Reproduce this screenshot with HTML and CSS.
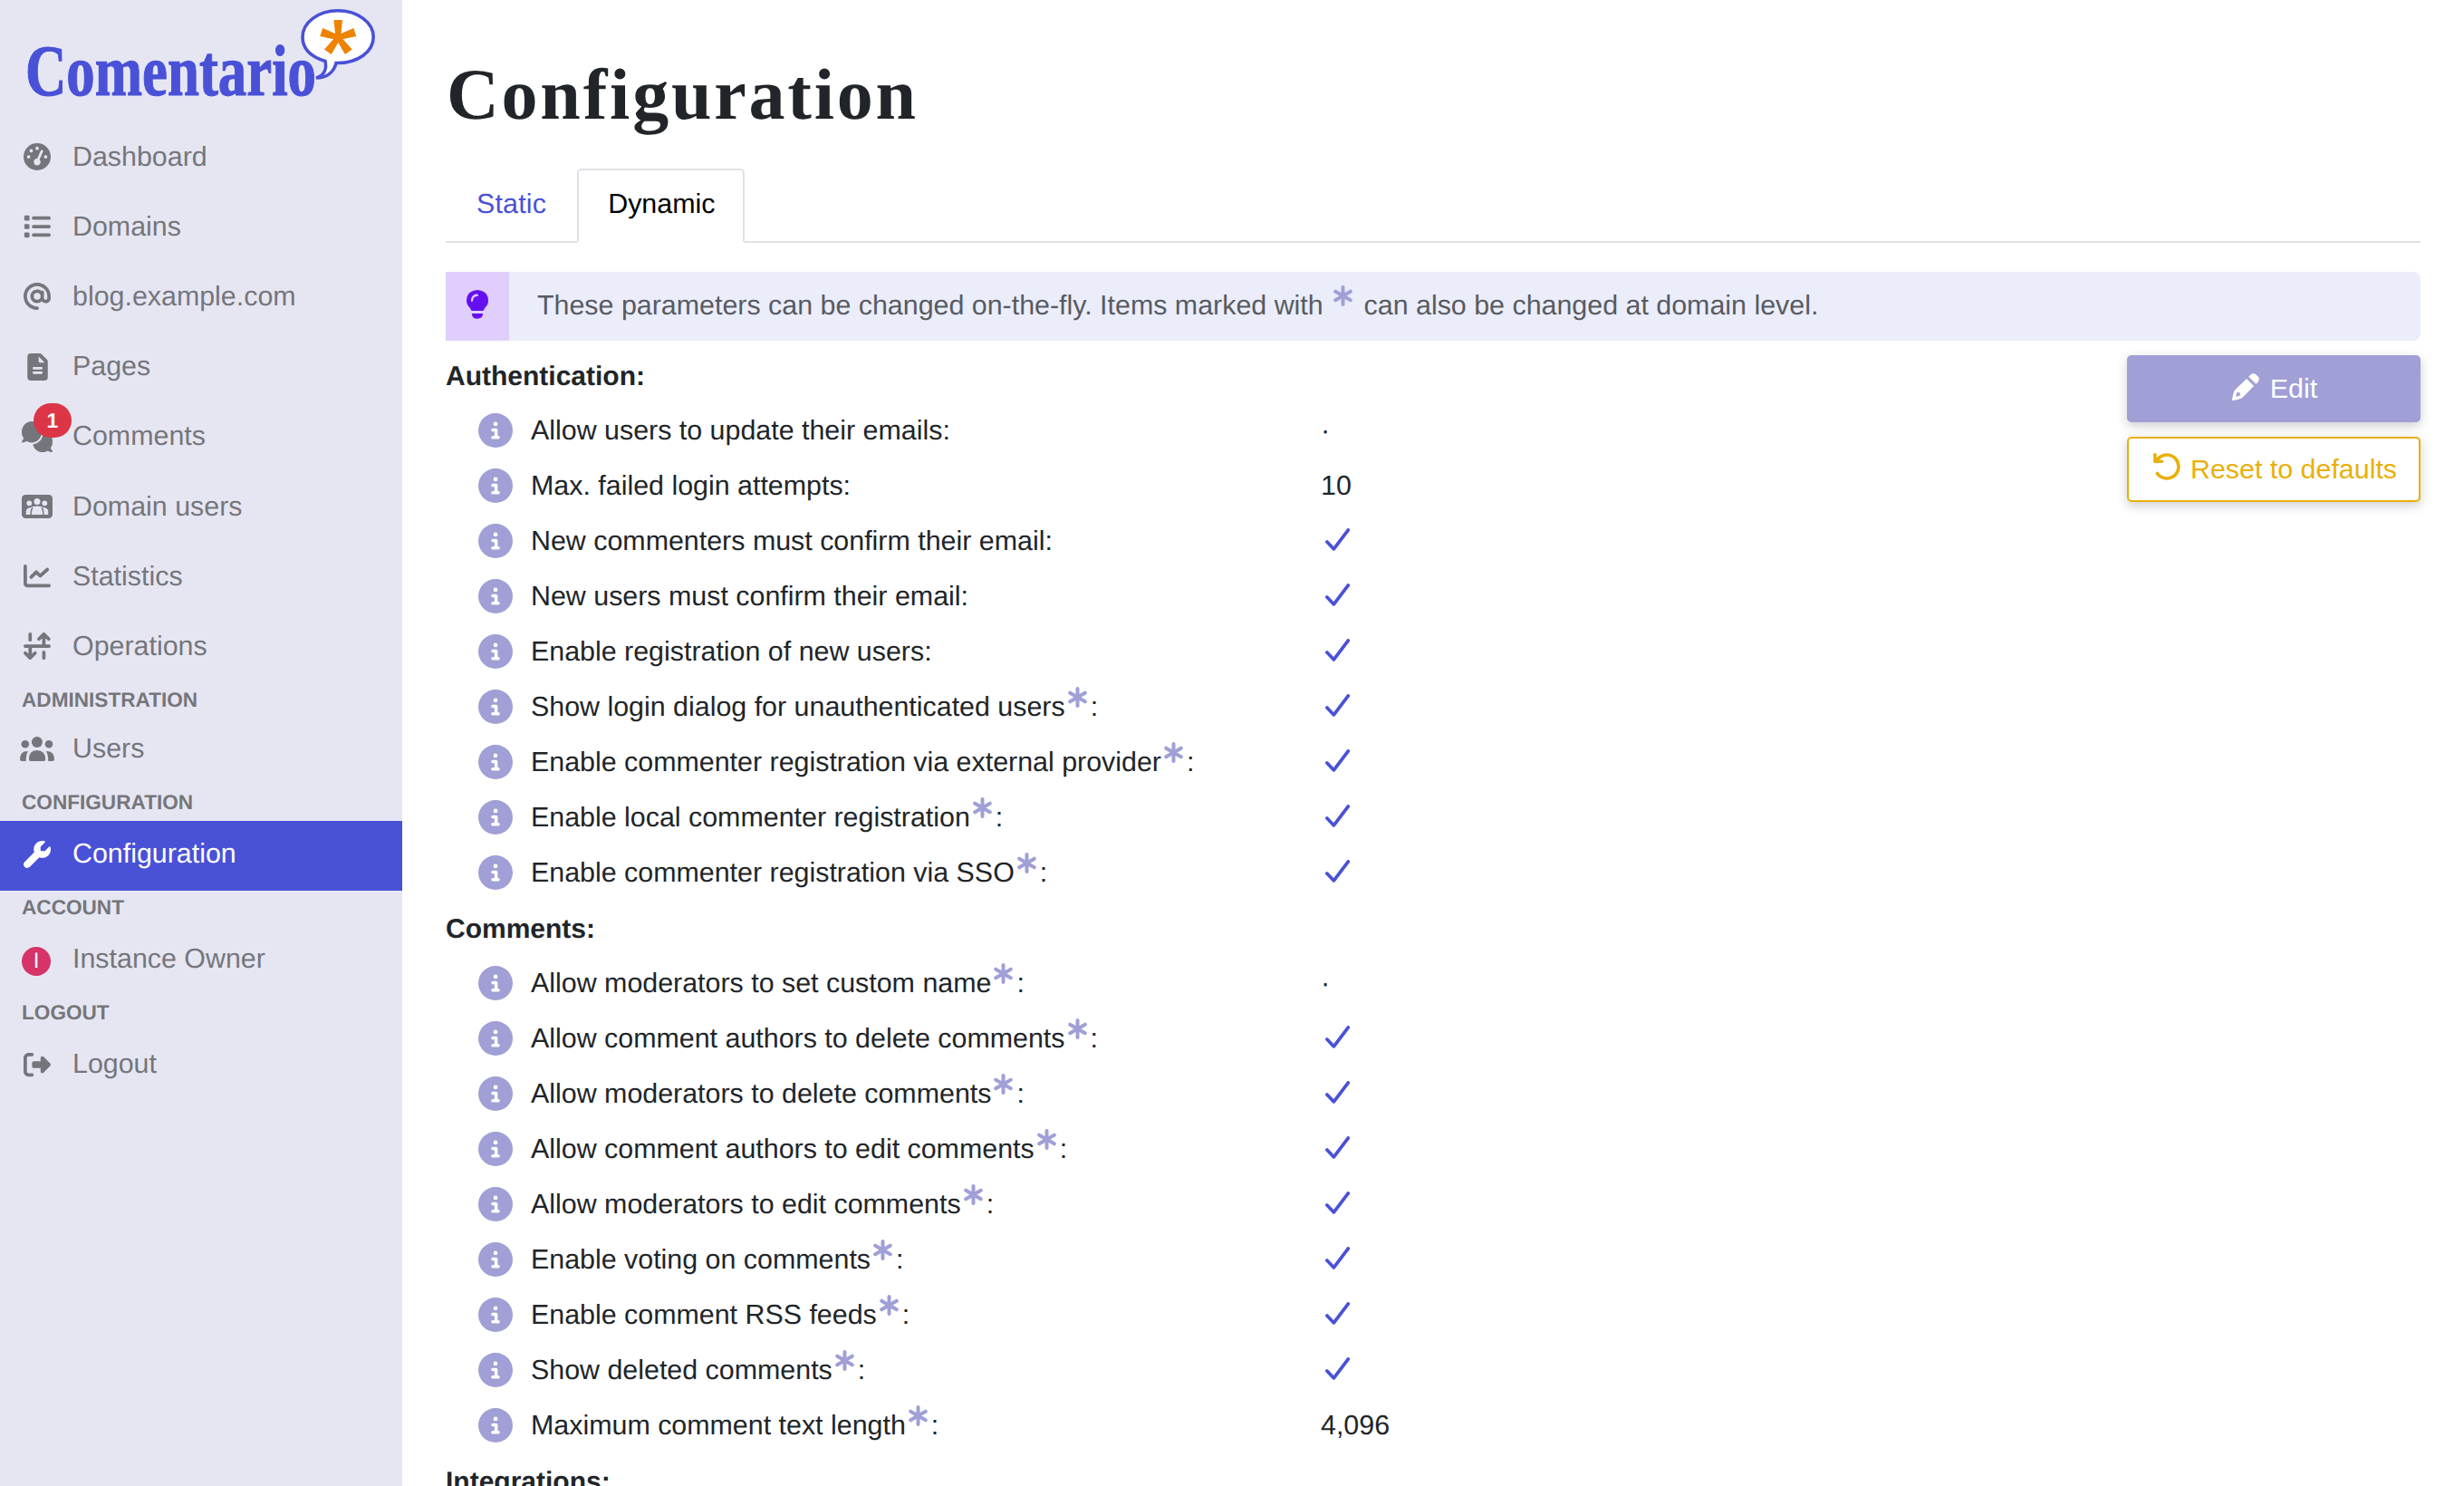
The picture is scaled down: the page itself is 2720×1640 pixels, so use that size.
FILE: index.html
```html
<!DOCTYPE html>
<html lang="en">
<head>
<meta charset="utf-8">
<title>Configuration | Comentario</title>
<link rel="stylesheet" href="styles.css">
</head>
<body>
<!-- icon sprite -->
<svg class="sprite">
	<symbol id="i-gauge" viewBox="0 0 512 512"><path fill-rule="evenodd" d="M0 256a256 256 0 1 1 512 0A256 256 0 1 1 0 256zM288 96a32 32 0 1 0 -64 0 32 32 0 1 0 64 0zM256 416c35.3 0 64-28.7 64-64c0-17.4-6.9-33.1-18.1-44.6L366 161.7c5.3-12.1-.2-26.3-12.3-31.6s-26.3 .2-31.6 12.3L257.9 288c-.6 0-1.3 0-1.9 0c-35.3 0-64 28.7-64 64s28.7 64 64 64zM176 144a32 32 0 1 0 -64 0 32 32 0 1 0 64 0zM96 288a32 32 0 1 0 0-64 32 32 0 1 0 0 64zm352-32a32 32 0 1 0 -64 0 32 32 0 1 0 64 0z"/></symbol>
	<symbol id="i-list" viewBox="0 0 512 512"><rect x="14" y="48" width="98" height="98" rx="24"/><rect x="14" y="207" width="98" height="98" rx="24"/><rect x="14" y="366" width="98" height="98" rx="24"/><path class="line" d="M188 97H480M188 256H480M188 415H480"/></symbol>
	<symbol id="i-at" viewBox="0 0 512 512"><path d="M256 64C150 64 64 150 64 256s86 192 192 192c17.700 0 32 14.300 32 32s-14.300 32-32 32C114.600 512 0 397.400 0 256S114.600 0 256 0S512 114.600 512 256v32c0 53-43 96-96 96c-29.300 0-55.600-13.200-73.200-33.900C320 371.100 289.500 384 256 384c-70.700 0-128-57.300-128-128s57.300-128 128-128c27.900 0 53.700 8.900 74.700 24.100c5.700-5 13.100-8.100 21.300-8.100c17.700 0 32 14.300 32 32v112c0 17.700 14.300 32 32 32s32-14.300 32-32V256c0-106-86-192-192-192zm64 192a64 64 0 1 0 -128 0 64 64 0 1 0 128 0z"/></symbol>
	<symbol id="i-file" viewBox="0 0 384 512"><path fill-rule="evenodd" d="M64 0H235Q252 0 264 12L372 120Q384 132 384 149V448Q384 512 320 512H64Q0 512 0 448V64Q0 0 64 0zM212 58V150Q212 174 236 174H326zM120 256Q97 256 97 278T120 302H266Q288 300 288 278T266 256zM120 342Q97 342 97 364T120 388H266Q288 386 288 364T266 342z"/></symbol>
	<symbol id="i-comments" viewBox="0 0 640 512" preserveAspectRatio="none"><path d="M208 352c114.900 0 208-78.800 208-176S322.900 0 208 0S0 78.800 0 176c0 38.600 14.700 74.300 39.600 103.400c-3.500 9.400-8.700 17.700-14.200 24.700c-4.800 6.200-9.700 11-13.300 14.300c-1.800 1.600-3.300 2.900-4.300 3.700C1 327.200-1.400 334.400 .8 340.900S9.100 352 16 352c21.800 0 43.800-5.600 62.100-12.500c9.200-3.500 17.800-7.400 25.200-11.400C134.100 343.300 169.800 352 208 352zM448 176c0 112.300-99.100 196.900-216.500 207C255.800 457.400 336.400 512 432 512c38.200 0 73.900-8.700 104.700-23.900c7.500 4 16 7.900 25.200 11.400c18.300 6.900 40.300 12.500 62.100 12.500c6.900 0 13.100-4.500 15.200-11.100c2.100-6.600-.2-13.800-5.800-17.900c-1-.8-2.500-2-4.300-3.700c-3.600-3.300-8.500-8.100-13.300-14.300c-5.500-7-10.700-15.400-14.200-24.700c24.900-29 39.600-64.700 39.600-103.400c0-92.800-84.900-168.900-192.600-175.500c.4 5.100 .6 10.300 .6 15.500z"/></symbol>
	<symbol id="i-users-rect" viewBox="0 0 34 26"><rect width="34" height="26" rx="4.200"/><g class="cutout"><circle cx="8.300" cy="9.300" r="2.900"/><circle cx="25.300" cy="9.300" r="2.900"/><circle cx="17" cy="7.500" r="3.500"/><path d="M4.800 22V18.500Q4.800 14.500 9.800 14.300Q12 12.400 17 12.400T24.200 14.300Q29.200 14.500 29.200 18.500V22z"/></g><path class="thin" d="M10.200 22V20Q10.200 16.500 12 14.200M23.800 22V20Q23.800 16.500 22 14.200"/></symbol>
	<symbol id="i-chart" viewBox="0 0 512 512"><path class="line" d="M32 64V384Q32 432 80 432H480M144 272L240 176L312 248L448 128"/></symbol>
	<symbol id="i-ops" viewBox="0 0 512 512"><path class="line" d="M32 256H480M124 32V140M124 256V470M32 388L124 480L216 388M382 480V372M382 256V42M290 124L382 32L474 124"/></symbol>
	<symbol id="i-users" viewBox="0 0 38 27"><circle cx="5.800" cy="8.300" r="4.300"/><circle cx="32" cy="8.300" r="4.300"/><circle cx="18.900" cy="6" r="6"/><path d="M9.900 25Q9.900 15 18.900 15T28.200 25Q28.200 27 26.200 27H11.900Q9.900 27 9.900 25zM9 16Q6.700 19.500 6.700 27H2Q0 27 0 25Q0 15.700 9 16zM28.800 16Q31.200 19.500 31.200 27H36Q38 27 38 25Q38 15.700 28.800 16z"/></symbol>
	<symbol id="i-wrench" viewBox="0 0 512 512"><path d="M352 320c88.400 0 160-71.600 160-160c0-15.300-2.200-30.100-6.200-44.200c-3.100-10.800-16.400-13.200-24.300-5.300l-76.800 76.800c-3 3-7.100 4.700-11.300 4.700H336c-8.800 0-16-7.200-16-16V118.600c0-4.200 1.700-8.300 4.700-11.300l76.800-76.800c7.900-7.900 5.400-21.200-5.300-24.300C382.100 2.200 367.300 0 352 0C263.600 0 192 71.600 192 160c0 19.100 3.400 37.500 9.500 54.500L19.900 396.100C7.200 408.800 0 426.100 0 444.100C0 481.600 30.400 512 67.900 512c18 0 35.300-7.200 48-19.900L297.500 310.500c17 6.200 35.400 9.500 54.500 9.500z"/></symbol>
	<symbol id="i-logout" viewBox="0 0 512 512"><path d="M377.900 105.900L500.700 228.700c7.200 7.200 11.300 17.100 11.300 27.300s-4.100 20.100-11.300 27.300L377.900 406.100c-6.400 6.400-15 9.900-24 9.900c-18.700 0-33.900-15.200-33.900-33.900l0-62.100-128 0c-17.700 0-32-14.300-32-32l0-64c0-17.700 14.300-32 32-32l128 0 0-62.100c0-18.700 15.200-33.900 33.900-33.900c9 0 17.600 3.600 24 9.900zM160 96L96 96c-17.700 0-32 14.300-32 32l0 256c0 17.700 14.300 32 32 32l64 0c17.700 0 32 14.300 32 32s-14.300 32-32 32l-64 0c-53 0-96-43-96-96L0 128C0 75 43 32 96 32l64 0c17.700 0 32 14.300 32 32s-14.300 32-32 32z"/></symbol>
	<symbol id="i-bulb" viewBox="0 0 24 32"><path fill-rule="evenodd" d="M12 0Q24 1 24 12Q24 16 20.500 19.500Q19 22 18.500 23H5.500Q5 22 3.500 19.500Q0 16 0 12Q0 1 12 0zM5 11.500Q4.700 13 6 13T7.200 11Q7.500 7.500 11.500 7Q13 6.800 13 5.800T11.500 4.600Q5.500 5 5 11.500zM6 26H18V27Q17.500 31.500 12 31.700T6 27z"/></symbol>
	<symbol id="i-pencil" viewBox="0 0 30 30"><path d="M18.200 3.800L20.500 1.500Q23-.8 26 1L29 4Q31 7 28.500 9.700L26.400 11.800z"/><path fill-rule="evenodd" d="M16 6L24 14L12.500 25.800Q11 27.400 8.500 28.200L1.500 30Q-.2 30.200 0 28.500L1.700 21.500Q2.300 19 4 17.400zM5.500 20.800L4 26L9.200 24.300L8.600 21.600z"/></symbol>
	<symbol id="i-reset" viewBox="0 0 30 30"><path class="reset" d="M1.900 1.800V9.300H9.500M2.200 9L6 5.500A13 13 0 1 1 4.300 22.500"/></symbol>
	<symbol id="i-info" viewBox="0 0 512 512"><path fill-rule="evenodd" d="M256 512A256 256 0 1 0 256 0a256 256 0 1 0 0 512zM216 336h24V272H216c-13.300 0-24-10.700-24-24s10.700-24 24-24h48c13.300 0 24 10.700 24 24v88h8c13.300 0 24 10.700 24 24s-10.700 24-24 24H216c-13.300 0-24-10.700-24-24s10.700-24 24-24zm40-208a32 32 0 1 1 0 64 32 32 0 1 1 0-64z"/></symbol>
	<symbol id="i-star" viewBox="0 0 21 23"><path class="star" d="M10.500 2V21M2.200 6.700L18.800 16.300M18.800 6.700L2.200 16.300"/></symbol>
	<symbol id="i-check" viewBox="0 0 27 25"><path class="check" d="M1.900 15L9.400 22.900L25.300 1.900"/></symbol>
</svg>

<nav class="sidebar">
	<svg class="logo" viewBox="0 0 444 136">
		<text class="logo-text" x="28" y="105" textLength="321" lengthAdjust="spacingAndGlyphs">Comentario</text>
		<path class="bubble" d="M359 67.500C341 62 334 52 334 41C334 25 351 11.800 373 11.800S412.200 25 412.200 41S395 70 371 69.500C369 79 361 86 349 86C358 83 361 76 359 67.500z"/>
		<g class="logo-star">
			<path id="ray" d="M368.500 22h9.500l-2 20h-5.500z"/>
			<use href="#ray" transform="rotate(72 373.300 41.500)"/>
			<use href="#ray" transform="rotate(144 373.300 41.500)"/>
			<use href="#ray" transform="rotate(216 373.300 41.500)"/>
			<use href="#ray" transform="rotate(288 373.300 41.500)"/>
		</g>
	</svg>
	<a class="nav-item"><span class="nav-icon"><svg class="icon"><use href="#i-gauge"/></svg></span>Dashboard</a>
	<a class="nav-item"><span class="nav-icon"><svg class="icon"><use href="#i-list"/></svg></span>Domains</a>
	<a class="nav-item"><span class="nav-icon"><svg class="icon"><use href="#i-at"/></svg></span>blog.example.com</a>
	<a class="nav-item"><span class="nav-icon"><svg class="icon icon-file"><use href="#i-file"/></svg></span>Pages</a>
	<a class="nav-item"><span class="nav-icon"><svg class="icon icon-comments"><use href="#i-comments"/></svg><span class="badge">1</span></span>Comments</a>
	<a class="nav-item"><span class="nav-icon"><svg class="icon icon-rect"><use href="#i-users-rect"/></svg></span>Domain users</a>
	<a class="nav-item"><span class="nav-icon"><svg class="icon"><use href="#i-chart"/></svg></span>Statistics</a>
	<a class="nav-item"><span class="nav-icon"><svg class="icon"><use href="#i-ops"/></svg></span>Operations</a>
	<div class="nav-header nav-header-first">Administration</div>
	<a class="nav-item"><span class="nav-icon"><svg class="icon icon-users"><use href="#i-users"/></svg></span>Users</a>
	<div class="nav-header">Configuration</div>
	<a class="nav-item active"><span class="nav-icon"><svg class="icon"><use href="#i-wrench"/></svg></span>Configuration</a>
	<div class="nav-header">Account</div>
	<a class="nav-item"><span class="nav-icon"><span class="avatar">I</span></span>Instance Owner</a>
	<div class="nav-header">Logout</div>
	<a class="nav-item"><span class="nav-icon"><svg class="icon"><use href="#i-logout"/></svg></span>Logout</a>
</nav>

<main class="content">
	<h1>Configuration</h1>
	<div class="tabs">
		<a class="tab">Static</a>
		<a class="tab active">Dynamic</a>
	</div>
	<div class="info-block">
		<div class="info-icon"><svg class="bulb"><use href="#i-bulb"/></svg></div>
		<div class="info-text">These parameters can be changed on-the-fly. Items marked with <svg class="star-icon"><use href="#i-star"/></svg> can also be changed at domain level.</div>
	</div>
	<div class="columns">
		<div class="params">
			<h2>Authentication:</h2>
			<div class="row"><svg class="info"><use href="#i-info"/></svg><div class="name">Allow users to update their emails:</div><div class="value">·</div></div>
			<div class="row"><svg class="info"><use href="#i-info"/></svg><div class="name">Max. failed login attempts:</div><div class="value">10</div></div>
			<div class="row"><svg class="info"><use href="#i-info"/></svg><div class="name">New commenters must confirm their email:</div><div class="value"><svg class="check-icon"><use href="#i-check"/></svg></div></div>
			<div class="row"><svg class="info"><use href="#i-info"/></svg><div class="name">New users must confirm their email:</div><div class="value"><svg class="check-icon"><use href="#i-check"/></svg></div></div>
			<div class="row"><svg class="info"><use href="#i-info"/></svg><div class="name">Enable registration of new users:</div><div class="value"><svg class="check-icon"><use href="#i-check"/></svg></div></div>
			<div class="row"><svg class="info"><use href="#i-info"/></svg><div class="name">Show login dialog for unauthenticated users<svg class="star-icon"><use href="#i-star"/></svg>:</div><div class="value"><svg class="check-icon"><use href="#i-check"/></svg></div></div>
			<div class="row"><svg class="info"><use href="#i-info"/></svg><div class="name">Enable commenter registration via external provider<svg class="star-icon"><use href="#i-star"/></svg>:</div><div class="value"><svg class="check-icon"><use href="#i-check"/></svg></div></div>
			<div class="row"><svg class="info"><use href="#i-info"/></svg><div class="name">Enable local commenter registration<svg class="star-icon"><use href="#i-star"/></svg>:</div><div class="value"><svg class="check-icon"><use href="#i-check"/></svg></div></div>
			<div class="row"><svg class="info"><use href="#i-info"/></svg><div class="name">Enable commenter registration via SSO<svg class="star-icon"><use href="#i-star"/></svg>:</div><div class="value"><svg class="check-icon"><use href="#i-check"/></svg></div></div>
			<h2>Comments:</h2>
			<div class="row"><svg class="info"><use href="#i-info"/></svg><div class="name">Allow moderators to set custom name<svg class="star-icon"><use href="#i-star"/></svg>:</div><div class="value">·</div></div>
			<div class="row"><svg class="info"><use href="#i-info"/></svg><div class="name">Allow comment authors to delete comments<svg class="star-icon"><use href="#i-star"/></svg>:</div><div class="value"><svg class="check-icon"><use href="#i-check"/></svg></div></div>
			<div class="row"><svg class="info"><use href="#i-info"/></svg><div class="name">Allow moderators to delete comments<svg class="star-icon"><use href="#i-star"/></svg>:</div><div class="value"><svg class="check-icon"><use href="#i-check"/></svg></div></div>
			<div class="row"><svg class="info"><use href="#i-info"/></svg><div class="name">Allow comment authors to edit comments<svg class="star-icon"><use href="#i-star"/></svg>:</div><div class="value"><svg class="check-icon"><use href="#i-check"/></svg></div></div>
			<div class="row"><svg class="info"><use href="#i-info"/></svg><div class="name">Allow moderators to edit comments<svg class="star-icon"><use href="#i-star"/></svg>:</div><div class="value"><svg class="check-icon"><use href="#i-check"/></svg></div></div>
			<div class="row"><svg class="info"><use href="#i-info"/></svg><div class="name">Enable voting on comments<svg class="star-icon"><use href="#i-star"/></svg>:</div><div class="value"><svg class="check-icon"><use href="#i-check"/></svg></div></div>
			<div class="row"><svg class="info"><use href="#i-info"/></svg><div class="name">Enable comment RSS feeds<svg class="star-icon"><use href="#i-star"/></svg>:</div><div class="value"><svg class="check-icon"><use href="#i-check"/></svg></div></div>
			<div class="row"><svg class="info"><use href="#i-info"/></svg><div class="name">Show deleted comments<svg class="star-icon"><use href="#i-star"/></svg>:</div><div class="value"><svg class="check-icon"><use href="#i-check"/></svg></div></div>
			<div class="row"><svg class="info"><use href="#i-info"/></svg><div class="name">Maximum comment text length<svg class="star-icon"><use href="#i-star"/></svg>:</div><div class="value">4,096</div></div>
			<h2>Integrations:</h2>
		</div>
		<div class="buttons">
			<button class="btn btn-edit"><svg class="icon"><use href="#i-pencil"/></svg>Edit</button>
			<button class="btn btn-reset"><svg class="icon"><use href="#i-reset"/></svg>Reset to defaults</button>
		</div>
	</div>
</main>
</body>
</html>
```

FILE: styles.css
```css
* { box-sizing: border-box; }
body {
	margin: 0;
	display: flex;
	height: 1640px;
	overflow: hidden;
	background: #fff;
	color: #212529;
	font-family: "Liberation Sans", Arial, sans-serif;
	font-size: 30.4px;
	text-rendering: geometricPrecision;
}
svg { fill: currentColor; flex: none; }
.sprite {
	position: absolute;
	width: 0;
	height: 0;
}
.icon { width: 30px; height: 30px; }
.line {
	fill: none;
	stroke: currentColor;
	stroke-width: 64;
	stroke-linecap: round;
	stroke-linejoin: round;
}

/* sidebar */
.sidebar {
	flex: none;
	width: 444px;
	background: #e6e6f3;
	color: #75767b;
}
.logo {
	display: block;
	width: 444px;
	height: 136px;
}
.logo-text {
	font-family: "Liberation Serif", serif;
	font-weight: bold;
	font-size: 80px;
	fill: #4951d7;
	stroke: #4951d7;
	stroke-width: 1.2;
}
.bubble {
	fill: #fff;
	stroke: #4951d7;
	stroke-width: 3.6;
}
.logo-star { fill: #ee8300; }
.nav-item {
	display: flex;
	align-items: center;
	height: 77.2px;
	padding: 0 0 3px 20px;
}
.nav-item.active {
	background: #4951d7;
	color: #fff;
}
.nav-icon {
	position: relative;
	display: flex;
	justify-content: center;
	align-items: center;
	width: 42px;
	height: 40px;
	margin-right: 18px;
}
.icon-file { width: 23px; }
.icon-comments { width: 34px; height: 34px; }
.icon-rect { width: 34px; height: 26px; }
.icon-users { width: 38px; height: 27px; }
.cutout { fill: #e6e6f3; }
.thin {
	fill: none;
	stroke: #75767b;
	stroke-width: 1.4;
}
.badge {
	position: absolute;
	left: 17px;
	top: -17px;
	width: 42px;
	height: 38px;
	border-radius: 19px;
	background: #dc3545;
	color: #fff;
	font-size: 23px;
	font-weight: bold;
	line-height: 39px;
	text-align: center;
}
.avatar {
	width: 32px;
	height: 32px;
	margin: 4px 2px 0 0;
	border-radius: 50%;
	background: #d63369;
	color: #fff;
	font-size: 24px;
	line-height: 32px;
	text-align: center;
}
.nav-header {
	height: 38.8px;
	padding-left: 24px;
	font-size: 22.6px;
	font-weight: bold;
	line-height: 38px;
	text-transform: uppercase;
}
.nav-header-first {
	height: 36.4px;
	line-height: 37px;
}

/* content */
.content {
	flex: 1;
	padding: 0 48px;
}
h1 {
	height: 138px;
	margin: 48px 0 0 1px;
	font-family: "Liberation Serif", serif;
	font-size: 80px;
	font-weight: bold;
	line-height: 115px;
	letter-spacing: 2.8px;
}
.tabs {
	display: flex;
	height: 82px;
	border-bottom: 2px solid #dee2e6;
}
.tab {
	height: 82px;
	padding: 0 32px;
	border: 2px solid transparent;
	color: #4951d7;
	line-height: 75px;
	letter-spacing: .2px;
}
.tab.active {
	padding-right: 31px;
	border-color: #dee2e6 #dee2e6 #fff;
	border-radius: 5px 5px 0 0;
	background: #fff;
	color: #000;
	letter-spacing: 0;
}
.info-block {
	display: flex;
	height: 76px;
	margin: 32px 0 16px;
	border-radius: 0 8px 8px 0;
	background: #ebedfa;
	color: #585b62;
	line-height: 75px;
}
.info-icon {
	width: 70px;
	padding: 20px 0 0 23px;
	background: #e0cffc;
	color: #6610f2;
	line-height: 0;
}
.bulb { width: 24px; height: 32px; }
.info-text { padding-left: 31px; }
.columns {
	display: flex;
	justify-content: space-between;
}
.params { width: 1800px; }
h2 {
	height: 61px;
	margin: 0;
	font-size: 30px;
	line-height: 47px;
}
.row {
	display: flex;
	align-items: flex-start;
	height: 61px;
	padding-left: 36px;
	line-height: 44px;
}
.info {
	width: 38px;
	height: 38px;
	margin: 3px 20px 0 0;
	color: #a09fd6;
}
.name { width: 872px; }
.star-icon {
	width: 21px;
	height: 23px;
	margin: 0 4px 0 3px;
	vertical-align: 9px;
	color: #a09fd6;
}
.star {
	fill: none;
	stroke: currentColor;
	stroke-width: 4;
	stroke-linecap: round;
}
.check-icon {
	width: 27px;
	height: 25px;
	margin: 8px 0 0 5px;
	vertical-align: top;
	color: #4951d7;
}
.check {
	fill: none;
	stroke: currentColor;
	stroke-width: 3.7;
	stroke-linecap: round;
	stroke-linejoin: round;
}

/* buttons */
.buttons {
	display: flex;
	flex-direction: column;
	gap: 16px;
	width: 324px;
}
.btn {
	display: flex;
	justify-content: center;
	height: 74px;
	padding: 18px 0 0;
	border: 2px solid #a09fd6;
	border-radius: 5px;
	font-family: inherit;
	font-size: 30.4px;
	line-height: 32px;
	box-shadow: 0 4px 12px rgba(30, 30, 60, .22);
}
.btn-edit {
	gap: 12px;
	padding-left: 2px;
	background: #a09fd6;
	color: #fff;
}
.btn-reset {
	gap: 11px;
	height: 72px;
	padding: 16px 0 0 3px;
	border-color: #e8b008;
	background: #fff;
	color: #e8b008;
	line-height: 34px;
}
.reset {
	fill: none;
	stroke: currentColor;
	stroke-width: 3.6;
	stroke-linecap: round;
	stroke-linejoin: round;
}
```
